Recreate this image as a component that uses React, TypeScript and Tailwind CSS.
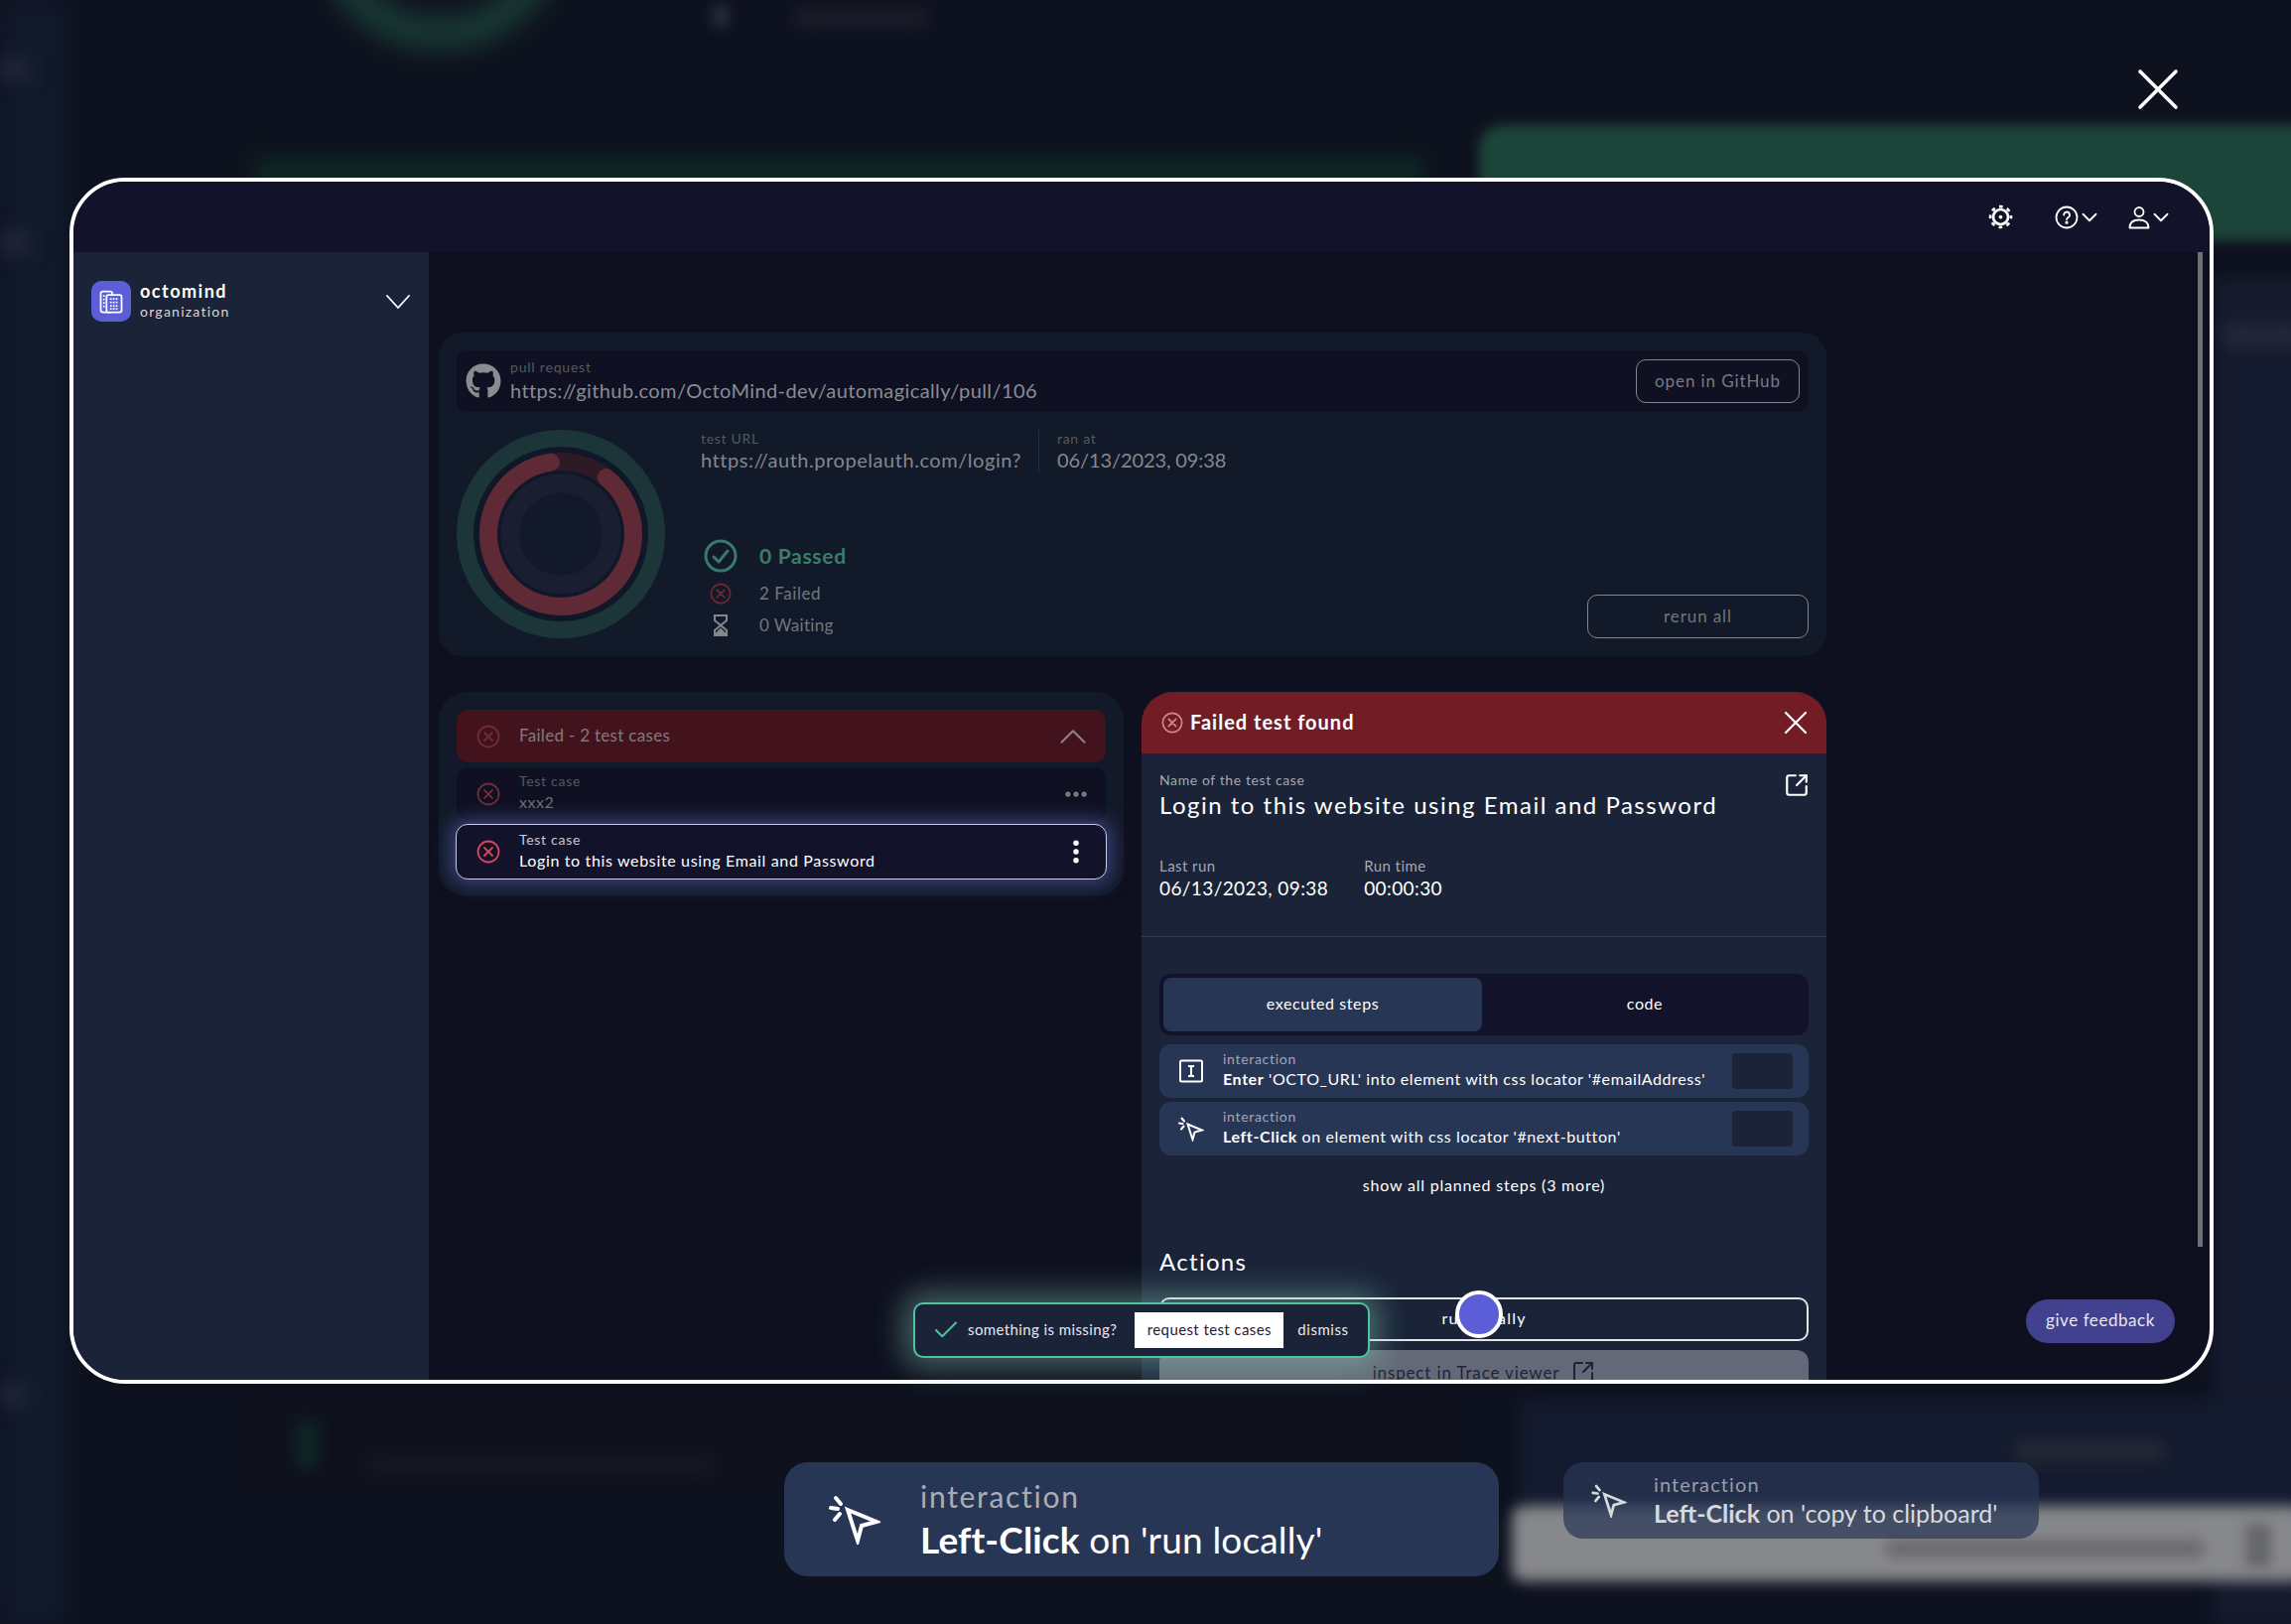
import React from 'react';
import { X, ChevronDown, ChevronUp, SquareArrowOutUpRight, Check, Ellipsis, EllipsisVertical } from 'lucide-react';
import { FaGithub } from 'react-icons/fa';

const MouseIcon = ({ className }: { className: string }) => (
  <svg viewBox="0 0 52 50" fill="none" stroke="currentColor" strokeWidth={4} strokeLinecap="round" className={className}>
    <path d="M19 15 L48 27 L33 31 L29 46 Z" strokeLinejoin="miter" />
    <path d="M7 3 L12 9" />
    <path d="M2 13 L9 14" />
    <path d="M6 25 L11 19" />
  </svg>
);

const FailIcon = ({ className }: { className: string }) => (
  <svg viewBox="0 0 24 24" fill="none" stroke="currentColor" strokeWidth={1.8} strokeLinecap="round" className={className}>
    <circle cx="12" cy="12" r="10.5" />
    <path d="M8 8 L16 16 M16 8 L8 16" />
  </svg>
);

const Gear = ({ className }: { className: string }) => (
  <svg viewBox="0 0 24 24" fill="none" stroke="currentColor" className={className}>
    <circle cx="12" cy="12" r="7.2" strokeWidth={2.6} />
    <circle cx="12" cy="12" r="10" strokeWidth={2.6} strokeDasharray="3.6 4.25" strokeDashoffset="1.8" />
    <circle cx="12" cy="12" r="1.8" fill="currentColor" stroke="none" />
  </svg>
);

const Step = ({ icon, bold, rest }: { icon: React.ReactNode; bold: string; rest: string }) => (
  <div className="flex h-[54px] items-center rounded-xl bg-[#283655] pr-[16px]">
    <div className="flex w-[64px] justify-center">{icon}</div>
    <div className="flex-1 pb-[5px]">
      <div className="h-[20px] text-[14px] leading-[20px] tracking-[0.7px] text-[#a3a7b2]">interaction</div>
      <div className="h-[20px] text-[16px] leading-[20px] tracking-[0.6px] text-white"><span className="font-bold">{bold}</span> {rest}</div>
    </div>
    <div className="h-[36px] w-[61px] rounded bg-[#1a2338]" />
  </div>
);

const Backdrop = () => (
  <>
    <div className="absolute left-0 top-0 h-[1636px] w-[66px] bg-[#111a2c] blur-[12px]" />
    <div className="absolute left-[2230px] top-[280px] h-[1356px] w-[100px] bg-[#151b2e] blur-[8px]" />
    <div className="absolute left-[318px] top-[-190px] h-[240px] w-[250px] rounded-full border-[34px] border-[#183832] blur-[12px]" />
    <div className="absolute left-[718px] top-[4px] h-[24px] w-[16px] rounded bg-[#282b39] blur-[6px]" />
    <div className="absolute left-[800px] top-[8px] h-[20px] w-[135px] rounded bg-[#1a1d29] blur-[8px]" />
    <div className="absolute left-[255px] top-[158px] h-[40px] w-[1180px] rounded-xl bg-[#0e2624] blur-[10px]" />
    <div className="absolute left-[1490px] top-[126px] h-[116px] w-[900px] rounded-3xl bg-[#1c4539] blur-[6px]" />
    <div className="absolute left-[2240px] top-[325px] h-[26px] w-[80px] rounded bg-[#23273a] blur-[8px]" />
    <div className="absolute left-[0px] top-[60px] h-[20px] w-[28px] rounded bg-[#262b3a] blur-[10px]" />
    <div className="absolute left-[0px] top-[235px] h-[20px] w-[28px] rounded bg-[#262b3a] blur-[10px]" />
    <div className="absolute left-[0px] top-[1395px] h-[20px] w-[24px] rounded bg-[#262b3a] blur-[10px]" />
    <div className="absolute left-[240px] top-[1405px] h-[90px] w-[1230px] rounded-xl bg-[#0f121d] blur-[10px]" />
    <div className="absolute left-[300px] top-[1430px] h-[50px] w-[18px] rounded-full bg-[#0f2a27] blur-[8px]" />
    <div className="absolute left-[370px] top-[1465px] h-[24px] w-[350px] rounded bg-[#151823] blur-[8px]" />
    <div className="absolute left-[1530px] top-[1410px] h-[120px] w-[800px] rounded-xl bg-[#141b2f] blur-[8px]" />
    <div className="absolute left-[2030px] top-[1452px] h-[20px] w-[150px] rounded bg-[#262a36] blur-[8px]" />
    <div className="absolute left-[1523px] top-[1517px] h-[76px] w-[800px] rounded-xl bg-[#87888c] blur-[7px]" />
    <div className="absolute left-[1900px] top-[1550px] h-[20px] w-[320px] rounded bg-[#6c6d72] blur-[6px]" />
    <div className="absolute left-[2262px] top-[1535px] h-[44px] w-[26px] rounded bg-[#66676b] blur-[6px]" />
  </>
);

export default function App() {
  return (
    <div className="relative h-[1636px] w-[2308px] overflow-hidden bg-[#0e121f] font-[family-name:Lato,sans-serif]">
      <Backdrop />

      <X className="absolute left-[2138px] top-[54px] h-[72px] w-[72px] text-white" strokeWidth={1.2} />

      {/* app window */}
      <div className="absolute left-[70px] top-[179px] flex h-[1215px] w-[2160px] flex-col overflow-hidden rounded-[56px] border-4 border-white bg-[#0e101f]">
        <header className="flex h-[71px] shrink-0 items-center justify-end bg-[#12132a] pr-[36px] text-white">
          <Gear className="mr-[42px] h-[25px] w-[25px]" />
          <svg viewBox="0 0 24 24" fill="none" stroke="currentColor" strokeWidth={1.8} strokeLinecap="round" className="h-[24px] w-[24px]">
            <circle cx="12" cy="12" r="10.5" />
            <path d="M9.2 9.5a2.9 2.9 0 1 1 4.4 2.4c-1 .6-1.6 1.1-1.6 2.2" />
            <circle cx="12" cy="17.2" r="0.7" fill="currentColor" />
          </svg>
          <ChevronDown className="-ml-[2px] mr-[25px] h-[26px] w-[26px]" strokeWidth={1.7} />
          <svg viewBox="0 0 24 24" fill="none" stroke="currentColor" strokeWidth={1.8} className="h-[24px] w-[24px]">
            <circle cx="12" cy="6.5" r="4.5" />
            <path d="M2.5 22.5c0-5.5 4-8 9.5-8s9.5 2.5 9.5 8z" strokeLinejoin="round" />
          </svg>
          <ChevronDown className="-ml-[3px] h-[26px] w-[26px]" strokeWidth={1.7} />
        </header>

        <div className="flex min-h-0 flex-1">
          <aside className="w-[358px] shrink-0 bg-[#1a2338] pl-[18px] pr-[18px] pt-[29px]">
            <div className="flex items-center">
              <div className="flex h-[41px] w-[40px] items-center justify-center rounded-[10px] bg-[#5b5ed6]">
                <svg viewBox="0 0 24 24" fill="none" stroke="white" strokeWidth={1.5} className="h-[28px] w-[28px]">
                  <rect x="3" y="3" width="10" height="18" rx="2" />
                  <rect x="8" y="6" width="13" height="15" rx="1.5" fill="#5b5ed6" />
                  <path d="M11 9.5h7M11 12.5h7M11 15.5h7M11 18h7" strokeDasharray="1.5 1" />
                  <path d="M5 7h1.5M5 10h1.5M5 13h1.5M5 16h1.5" />
                </svg>
              </div>
              <div className="ml-[9px] flex-1">
                <div className="h-[21px] text-[18px] font-bold leading-[21px] tracking-[1.5px] text-white">octomind</div>
                <div className="h-[20px] text-[14px] leading-[20px] tracking-[1.25px] text-[#d5d7de]">organization</div>
              </div>
              <svg viewBox="0 0 24 14" fill="none" stroke="white" strokeWidth={1.8} strokeLinecap="round" className="mr-[1px] h-[14px] w-[24px]">
                <path d="M1 1 L12 13 L23 1" />
              </svg>
            </div>
          </aside>

          <main className="relative min-w-0 flex-1 overflow-hidden pl-[10px] pt-[81px]">
            {/* run summary */}
            <section className="h-[326px] w-[1398px] rounded-3xl bg-[#121929] p-[18px]">
              <div className="flex h-[62px] items-center rounded-[10px] bg-[#0f1122] pl-[9px] pr-[9px]">
                <FaGithub className="h-[36px] w-[36px] text-[#8b8c90]" />
                <div className="ml-[9px] flex-1">
                  <div className="h-[16px] text-[14px] leading-[16px] tracking-[0.8px] text-[#56585f]">pull request</div>
                  <div className="mt-[2px] h-[26px] text-[20px] leading-[26px] tracking-[0.4px] text-[#8a8c93]">https://github.com/OctoMind-dev/automagically/pull/106</div>
                </div>
                <button className="h-[44px] w-[165px] rounded-[10px] border border-[#84868c] text-[17px] tracking-[0.9px] text-[#787a81]">open in GitHub</button>
              </div>

              <div className="mt-[18px] flex">
                <svg viewBox="0 0 210 210" fill="none" className="h-[210px] w-[210px] shrink-0">
                  <circle cx="105" cy="105" r="96" stroke="#1b3539" strokeWidth="18" />
                  <circle cx="105" cy="105" r="73" stroke="#0f1729" strokeWidth="30" />
                  <circle cx="105" cy="105" r="73" stroke="#2e1a27" strokeWidth="18" />
                  <path d="M150.6 48 A73 73 0 1 1 94.8 32.7" stroke="#5f2a35" strokeWidth="18" strokeLinecap="round" />
                  <circle cx="105" cy="105" r="51" stroke="#191e30" strokeWidth="19" />
                </svg>

                <div className="ml-[36px] min-w-0 flex-1">
                  <div className="flex h-[43px]">
                    <div className="w-[340px]">
                      <div className="h-[18px] text-[14px] leading-[18px] tracking-[0.7px] text-[#56585f]">test URL</div>
                      <div className="h-[25px] text-[20px] leading-[25px] tracking-[0.55px] text-[#85878e]">https://auth.propelauth.com/login?</div>
                    </div>
                    <div className="w-px bg-[#262c40]" />
                    <div className="pl-[18px]">
                      <div className="h-[18px] text-[14px] leading-[18px] tracking-[0.7px] text-[#56585f]">ran at</div>
                      <div className="h-[25px] text-[20px] leading-[25px] tracking-[-0.1px] text-[#85878e]">06/13/2023, 09:38</div>
                    </div>
                  </div>
                  <div className="flex items-end justify-between">
                    <div className="-mb-[3px] mt-[64px]">
                      <div className="flex h-[40px] items-center">
                        <div className="flex w-[40px] justify-center">
                          <svg viewBox="0 0 34 34" fill="none" stroke="#37796a" strokeWidth={3} strokeLinecap="round" strokeLinejoin="round" className="h-[34px] w-[34px]">
                            <circle cx="17" cy="17" r="15" />
                            <path d="M10 18 L15 23 L24 12" />
                          </svg>
                        </div>
                        <div className="ml-[19px] text-[21px] font-bold tracking-[0.7px] text-[#3a7d6b]">0 Passed</div>
                      </div>
                      <div className="mt-[2px] flex h-[32px] items-center">
                        <div className="flex w-[40px] justify-center"><FailIcon className="h-[22px] w-[22px] text-[#7a2632]" /></div>
                        <div className="ml-[19px] text-[17px] tracking-[0.55px] text-[#74767e]">2 Failed</div>
                      </div>
                      <div className="flex h-[32px] items-center">
                        <div className="flex w-[40px] justify-center">
                          <svg viewBox="0 0 14 22" fill="none" stroke="#85878d" strokeWidth={2} className="h-[22px] w-[14px]">
                            <path d="M1 1 H13 V6 L7 11 L13 16 V21 H1 V16 L7 11 L1 6 Z" />
                            <path d="M3 19 L7 15 L11 19 Z" fill="#85878d" />
                          </svg>
                        </div>
                        <div className="ml-[19px] pb-[1px] text-[17px] tracking-[0.35px] text-[#74767e]">0 Waiting</div>
                      </div>
                    </div>
                    <button className="h-[44px] w-[223px] rounded-[10px] border border-[#84868c] text-[17px] tracking-[0.9px] text-[#73757c]">rerun all</button>
                  </div>
                </div>
              </div>
            </section>

            <div className="mt-[36px] flex gap-[18px]">
              {/* test case list */}
              <section className="h-[206px] w-[690px] shrink-0 rounded-[28px] bg-[#121929] px-[18px] pt-[18px]">
                <div className="flex h-[53px] items-center rounded-xl bg-[#43131d] pl-[20px] pr-[18px]">
                  <FailIcon className="h-[24px] w-[24px] text-[#6f2d37]" />
                  <div className="ml-[19px] flex-1 pb-[2px] text-[17px] tracking-[0.3px] text-[#83797e]">Failed - 2 test cases</div>
                  <ChevronUp className="-mr-[8px] h-[46px] w-[46px] text-[#8b8488]" strokeWidth={1.1} />
                </div>
                <div className="mt-[5px] flex h-[54px] items-center rounded-xl bg-[#0f1122] pl-[20px] pr-[18px]">
                  <FailIcon className="h-[24px] w-[24px] text-[#6f2d37]" />
                  <div className="ml-[19px] flex-1 pb-[5px]">
                    <div className="h-[20px] text-[14px] leading-[20px] tracking-[0.7px] text-[#55575e]">Test case</div>
                    <div className="h-[21px] text-[16px] leading-[21px] tracking-[0.5px] text-[#6e7077]">xxx2</div>
                  </div>
                  <Ellipsis className="-mr-[2px] h-[28px] w-[28px] text-[#7c7e85]" strokeWidth={2.4} />
                </div>
                <div className="relative mt-[3px] -mx-[1px] flex h-[56px] items-center rounded-xl border border-[#c9cbec] bg-[#12132a] pl-[20px] pr-[18px] shadow-[0_0_18px_5px_rgba(100,105,200,0.5)]">
                  <FailIcon className="h-[24px] w-[24px] text-[#d9465a]" />
                  <div className="ml-[19px] flex-1 pb-[4px]">
                    <div className="h-[20px] text-[14px] leading-[20px] tracking-[0.7px] text-[#c8cad0]">Test case</div>
                    <div className="h-[21px] text-[16px] leading-[21px] tracking-[0.65px] text-white">Login to this website using Email and Password</div>
                  </div>
                  <EllipsisVertical className="-mr-[3px] h-[30px] w-[30px] text-white" strokeWidth={2.4} />
                </div>
              </section>

              {/* failed test detail */}
              <section className="w-[690px] shrink-0 rounded-t-[32px] bg-[#1a2338]">
                <div className="flex h-[62px] items-center rounded-t-[32px] bg-[#721d26] pl-[20px] pr-[11px]">
                  <FailIcon className="h-[22px] w-[22px] text-[#d08a92]" />
                  <div className="ml-[7px] flex-1 pb-[2px] text-[20px] font-bold tracking-[1px] text-white">Failed test found</div>
                  <X className="h-[40px] w-[40px] text-white" strokeWidth={1.3} />
                </div>
                <div className="border-b border-[#2f3a5c] px-[18px] pb-[35px] pt-[18px]">
                  <div className="flex justify-between">
                    <div>
                      <div className="h-[18px] text-[14px] leading-[18px] tracking-[0.6px] text-[#a3a7b2]">Name of the test case</div>
                      <div className="h-[32px] text-[24px] leading-[32px] tracking-[1.5px] text-white">Login to this website using Email and Password</div>
                    </div>
                    <SquareArrowOutUpRight className="mr-[-1px] mt-[1px] h-[26px] w-[26px] text-white" strokeWidth={2} />
                  </div>
                  <div className="mt-[35px] flex gap-[36px]">
                    <div>
                      <div className="h-[20px] text-[15px] leading-[20px] tracking-[0.45px] text-[#a3a7b2]">Last run</div>
                      <div className="h-[26px] text-[19px] leading-[26px] tracking-[0.4px] text-white">06/13/2023, 09:38</div>
                    </div>
                    <div>
                      <div className="h-[20px] text-[15px] leading-[20px] tracking-[0.45px] text-[#a3a7b2]">Run time</div>
                      <div className="h-[26px] text-[19px] leading-[26px] tracking-[0.4px] text-white">00:00:30</div>
                    </div>
                  </div>
                </div>

                <div className="px-[18px] pt-[37px]">
                  <div className="flex h-[62px] gap-[0px] rounded-xl bg-[#12132a] p-[4px]">
                    <div className="flex w-[321px] items-center justify-center rounded-lg bg-[#283655] pb-[3px] text-[16px] tracking-[0.6px] text-white">executed steps</div>
                    <div className="flex flex-1 items-center justify-center pb-[3px] pl-[3px] text-[16px] tracking-[0.6px] text-white">code</div>
                  </div>
                  <div className="mt-[9px] flex flex-col gap-[4px]">
                    <Step
                      bold="Enter"
                      rest="'OCTO_URL' into element with css locator '#emailAddress'"
                      icon={
                        <svg viewBox="0 0 24 24" fill="none" stroke="white" strokeWidth={2} className="h-[24px] w-[24px]">
                          <rect x="1" y="1.5" width="22" height="21" rx="1.5" />
                          <path d="M9 7h6M9 17h6M12 7v10" />
                        </svg>
                      }
                    />
                    <Step bold="Left-Click" rest="on element with css locator '#next-button'" icon={<MouseIcon className="h-[25px] w-[26px] text-white" />} />
                  </div>
                  <div className="mt-[18px] h-[24px] text-center text-[16px] leading-[24px] tracking-[0.8px] text-white">show all planned steps (3 more)</div>
                  <div className="mt-[49px] h-[32px] text-[24px] leading-[32px] tracking-[1.3px] text-white">Actions</div>
                  <button className="mt-[20px] h-[44px] w-full rounded-[10px] border-2 border-[#e2e4ea] pb-[2px] text-[16px] tracking-[1.2px] text-white">run locally</button>
                  <div className="mt-[9px] flex h-[60px] items-start justify-center gap-[12px] rounded-xl bg-[#646978] pt-[10px] text-[17px] tracking-[0.85px] text-[#1f2536]">
                    inspect in Trace viewer
                    <SquareArrowOutUpRight className="h-[24px] w-[24px] text-[#1a2338]" strokeWidth={2} />
                  </div>
                </div>
              </section>
            </div>

            <div className="absolute bottom-[134px] left-[1782px] top-0 w-[5px] bg-[#6e7077]" />
          </main>
        </div>
      </div>

      {/* floating bits over the window */}
      <div className="absolute left-[920px] top-[1312px] flex h-[56px] w-[460px] items-center rounded-[10px] border-2 border-[#4fc3a0] bg-[#1a2338] pb-[1px] shadow-[0_0_30px_10px_rgba(140,210,185,0.42)]">
        <Check className="ml-[16px] h-[30px] w-[30px] text-[#4fc3a0]" strokeWidth={1.6} />
        <div className="ml-[7px] text-[15px] tracking-[0.4px] text-[#e6e8ee]">something is missing?</div>
        <button className="ml-[18px] h-[36px] w-[150px] bg-white text-[15px] tracking-[0.4px] text-[#1a2338]">request test cases</button>
        <div className="ml-[14px] text-[15px] tracking-[0.55px] text-[#e6e8ee]">dismiss</div>
      </div>

      <div className="absolute left-[1466px] top-[1300px] h-[48px] w-[48px] rounded-full border-[4px] border-white bg-[#5b5ed6]" />

      <button className="absolute left-[2041px] top-[1309px] h-[44px] w-[150px] rounded-full bg-[#41418f] pb-[2px] text-[17px] tracking-[0.55px] text-[#e6e8ee]">give feedback</button>

      {/* interaction log chips */}
      <div className="absolute left-[790px] top-[1473px] flex h-[115px] w-[720px] items-center rounded-3xl bg-[#283655] pl-[45px]">
        <MouseIcon className="h-[50px] w-[52px] text-white" />
        <div className="ml-[40px]">
          <div className="h-[38px] text-[30px] leading-[38px] tracking-[1.7px] text-[#a9adb8]">interaction</div>
          <div className="mt-[2px] h-[46px] text-[37px] leading-[46px] tracking-[0.15px] text-white"><span className="font-bold">Left-Click</span> on 'run locally'</div>
        </div>
      </div>
      <div className="absolute left-[1575px] top-[1473px] flex h-[77px] w-[479px] items-center rounded-[20px] bg-[#283655]/70 pl-[28px]">
        <MouseIcon className="h-[34px] w-[36px] text-[#d8d9dd]" />
        <div className="ml-[27px] pb-[2px]">
          <div className="h-[26px] text-[20px] leading-[26px] tracking-[1.1px] text-[#9a9da8]">interaction</div>
          <div className="h-[32px] text-[25px] leading-[32px] text-[#d8d9dd]"><span className="font-bold">Left-Click</span> on 'copy to clipboard'</div>
        </div>
      </div>
    </div>
  );
}
